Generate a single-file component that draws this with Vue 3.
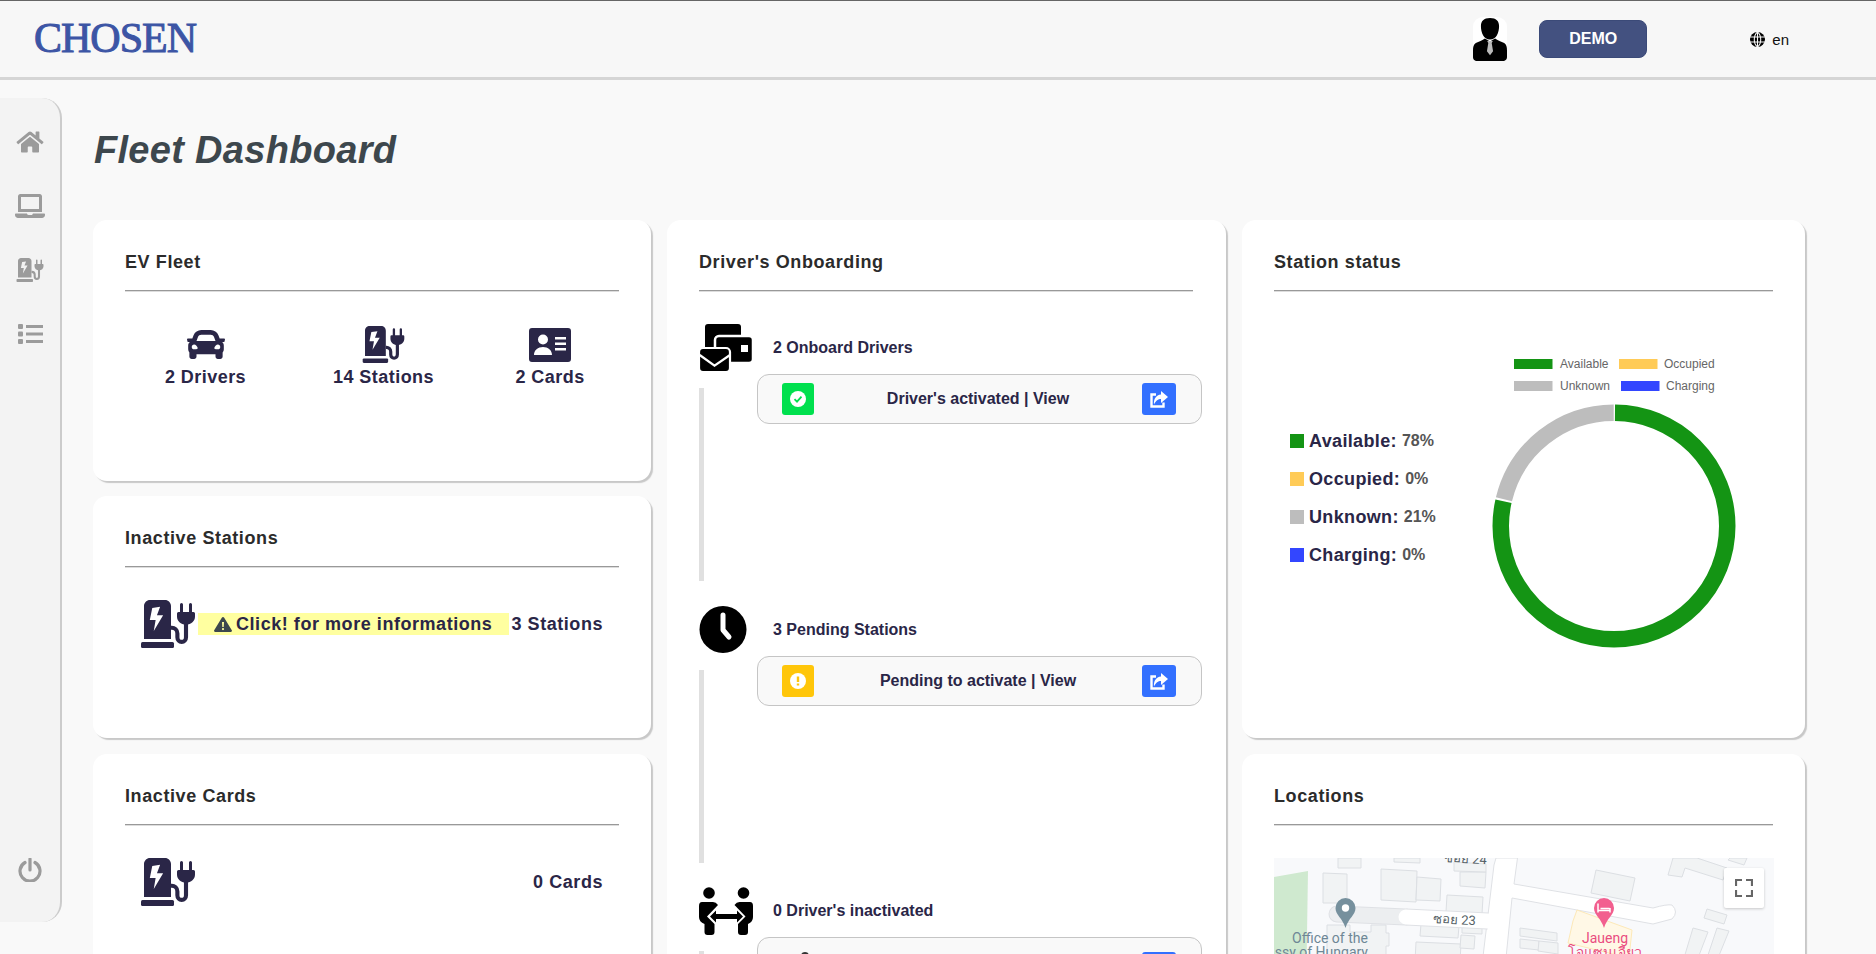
<script setup>
const fleet = [
  { icon: 'car', w: 38, h: 29, label: '2 Drivers' },
  { icon: 'station', w: 43, h: 37, label: '14 Stations' },
  { icon: 'idcard', w: 42, h: 34, label: '2 Cards' },
]

const steps = [
  { id: 'mail', label: '2 Onboard Drivers', action: "Driver's activated | View", kind: 'ok' },
  { id: 'clock', label: '3 Pending Stations', action: 'Pending to activate | View', kind: 'warn' },
  { id: 'people', label: "0 Driver's inactivated", action: '', kind: 'off' },
]

const statuses = [
  { name: 'Available', pct: '78%', color: '#149414' },
  { name: 'Occupied', pct: '0%', color: '#ffcb57' },
  { name: 'Unknown', pct: '21%', color: '#bdbdbd' },
  { name: 'Charging', pct: '0%', color: '#3346ff' },
]

// donut: 11 available / 3 unknown out of 14 stations
const radius = 113.25
const circ = 2 * Math.PI * radius
const donut = [
  { value: 11 / 14, start: 0, color: '#149414' },
  { value: 3 / 14, start: 11 / 14, color: '#bdbdbd' },
].map((s) => ({
  color: s.color,
  dash: `${s.value * circ - 2} ${circ}`,
  offset: -(s.start * circ + 1),
}))

const buildings = [
  '64,0 87,0 87,10 64,10',
  '49,15 73,16 73,45 49,45',
  '107,11 143,13 142,44 107,42',
  '143,19 167,21 166,43 142,42',
  '186,14 212,14 211,30 186,28',
  '173,37 209,39 208,56 172,54',
  '147,66 185,68 184,80 146,78',
  '142,84 187,86 186,104 141,104',
  '188,67 208,68 208,76 188,75',
  '187,77 201,78 200,91 186,90',
  '120,0 146,0 146,5 120,4',
  '180,4 212,6 212,14 180,13',
  '53,67 76,67 76,74 97,74 97,67 112,67 112,75 115,75 115,88 112,88 112,100 53,100',
  '322,12 361,20 356,43 317,35',
  '394,17 399,0 423,0 453,10 449,22 411,10 408,19',
  '456,0 473,0 470,7 454,2',
  '433,51 453,57 450,66 430,60',
  '419,70 434,74 424,100 410,100',
  '443,70 455,73 444,100 433,100',
  '246,70 283,75 283,83 246,78',
  '246,81 265,83 265,92 246,90',
  '265,83 284,85 284,96 264,93',
]
</script>

<template>
  <svg class="defs" width="0" height="0">
    <defs>
      <symbol id="station" viewBox="0 0 576 512">
        <path fill-rule="evenodd" d="M96 0h160c35 0 64 29 64 64v352H32V64C32 29 61 0 96 0zM204 72l-84 12-26 128h62l-20 118 100-168h-66l34-90z" />
        <rect y="448" width="352" height="64" rx="16" />
        <path d="M320 296h8c30 0 60 22 60 60v40c0 30 20 50 46 50s46-20 46-50V230" fill="none" stroke="currentColor" stroke-width="44" />
        <path d="M416 128V48a16 16 0 0 1 32 0v80h64V48a16 16 0 0 1 32 0v80h16a16 16 0 0 1 16 16v32c0 48-40 88-96 88s-96-40-96-88v-32a16 16 0 0 1 16-16z" />
      </symbol>
      <symbol id="car" viewBox="0 64 512 384" preserveAspectRatio="none">
        <path d="M499.99 176h-59.87l-16.64-41.6C406.38 91.63 365.57 64 319.5 64h-127c-46.06 0-86.88 27.63-103.99 70.4L71.87 176H12.01C4.2 176-1.53 183.34.37 190.91l6 24C7.7 220.25 12.5 224 18.01 224h20.07C24.65 235.73 16 252.78 16 272v48c0 16.12 6.16 30.67 16 41.93V416c0 17.67 14.33 32 32 32h32c17.67 0 32-14.33 32-32v-32h256v32c0 17.67 14.33 32 32 32h32c17.67 0 32-14.33 32-32v-54.07c9.84-11.25 16-25.8 16-41.93v-48c0-19.22-8.65-36.27-22.07-48H494c5.51 0 10.31-3.75 11.64-9.09l6-24c1.89-7.57-3.84-14.91-11.65-14.91zm-352.06-17.83c7.29-18.22 24.94-30.17 44.57-30.17h127c19.63 0 37.28 11.95 44.57 30.17L384 208H128l19.93-49.83zM96 319.8c-19.2 0-32-12.76-32-31.9S76.8 256 96 256s48 28.71 48 47.85-28.8 15.95-48 15.95zm320 0c-19.2 0-48 3.19-48-15.95S396.8 256 416 256s32 12.76 32 31.9-12.8 31.9-32 31.9z" />
      </symbol>
      <symbol id="idcard" viewBox="0 0 42 34">
        <path fill-rule="evenodd" d="M3 0h36a3 3 0 0 1 3 3v28a3 3 0 0 1-3 3H3a3 3 0 0 1-3-3V3a3 3 0 0 1 3-3zM14 6.500a5 5 0 1 0 0 10 5 5 0 0 0 0-10zM5 27h18c0-5-4-8-9-8s-9 3-9 8zM26 9v2.500h11V9zM26 14.500V17h11v-2.500zM26 20v2.500h11V20z" />
      </symbol>
    </defs>
  </svg>

  <div class="page">
    <header class="topbar">
      <div class="logo">CHOSEN</div>
      <div class="avatar">
        <svg width="34" height="44" viewBox="0 0 30 43" preserveAspectRatio="none">
          <rect width="30" height="43" rx="9" fill="#fff" />
          <path d="M15 1c5.500 0 8 3 8 8 0 3-.5 6-2 9-1 2-3 4-6 4s-5-2-6-4c-1.500-3-2-6-2-9 0-5 2.500-8 8-8z" />
          <path d="M10.500 21c-2 2-5.500 3-8 4.500C.5 27 0 29 0 33v6c0 2 1 4 4 4h22c3 0 4-2 4-4v-6c0-4-.5-6-2.500-7.500-2.500-1.500-6-2.500-8-4.500l-4.500 3z" />
          <path d="M12.500 23.500h5l-1 2 1.200 8-2.700 4-2.700-4 1.200-8z" fill="#bbb" />
        </svg>
      </div>
      <button class="demo">DEMO</button>
      <div class="lang">
        <svg width="15" height="15" viewBox="0 0 14 14">
          <circle cx="7" cy="7" r="7" />
          <path d="M0 4.700h14M0 9.300h14M7 0v14M7 0C3 3 3 11 7 14M7 0c4 3 4 11 0 14" fill="none" stroke="#f7f7f7" stroke-width="1" />
        </svg>
        <span>en</span>
      </div>
    </header>

    <div class="content">
      <nav class="sidebar">
        <svg class="nav-icon" viewBox="0 0 576 512"><path d="M280.37 148.26L96 300.11V464a16 16 0 0 0 16 16l112.06-.29a16 16 0 0 0 15.92-16V368a16 16 0 0 1 16-16h64a16 16 0 0 1 16 16v95.64a16 16 0 0 0 16 16.05L464 480a16 16 0 0 0 16-16V300L295.67 148.26a12.19 12.19 0 0 0-15.3 0zM571.6 251.47L488 182.56V44.05a12 12 0 0 0-12-12h-56a12 12 0 0 0-12 12v72.61L318.47 43a48 48 0 0 0-61 0L4.34 251.47a12 12 0 0 0-1.6 16.9l25.5 31A12 12 0 0 0 45.15 301l235.22-193.74a12.19 12.19 0 0 1 15.3 0L530.9 301a12 12 0 0 0 16.9-1.6l25.5-31a12 12 0 0 0-1.7-16.93z" /></svg>
        <svg class="nav-icon" viewBox="0 0 640 512"><path d="M624 416H381.54c-.74 19.81-14.71 32-32.74 32H288c-18.69 0-33.02-17.47-32.77-32H16c-8.8 0-16 7.2-16 16v16c0 35.2 28.8 64 64 64h512c35.2 0 64-28.8 64-64v-16c0-8.8-7.2-16-16-16zM576 48c0-26.400-21.600-48-48-48H112C85.600 0 64 21.600 64 48v336h512V48zm-64 272H128V64h384v256z" /></svg>
        <svg class="nav-icon"><use href="#station" /></svg>
        <svg class="nav-icon list-icon" viewBox="0 0 25 20">
          <rect width="5" height="5" rx="1" /><rect y="7.500" width="5" height="5" rx="1" /><rect y="15" width="5" height="5" rx="1" />
          <rect x="8" y="1" width="17" height="3" /><rect x="8" y="8.500" width="17" height="3" /><rect x="8" y="16" width="17" height="3" />
        </svg>
        <svg class="nav-icon power" viewBox="0 0 24 24">
          <path d="M7 4.500a10 10 0 1 0 10 0M12 1v11" fill="none" stroke="currentColor" stroke-width="3.200" stroke-linecap="round" />
        </svg>
      </nav>

      <main class="main">
        <h1 class="title">Fleet Dashboard</h1>
        <div class="columns">
          <div class="col">
            <section class="card fleet-card">
              <h2 class="card-title">EV Fleet</h2>
              <div class="fleet">
                <div v-for="item in fleet" :key="item.icon" class="fleet-item">
                  <div class="fleet-icon">
                    <svg :width="item.w" :height="item.h"><use :href="'#' + item.icon" /></svg>
                  </div>
                  <span>{{ item.label }}</span>
                </div>
              </div>
            </section>

            <section class="card inactive-card">
              <h2 class="card-title">Inactive Stations</h2>
              <div class="inactive">
                <svg class="station-icon"><use href="#station" /></svg>
                <div class="notice">
                  <svg width="18" height="15" viewBox="0 0 18 15">
                    <path fill-rule="evenodd" d="M9 0c.500 0 .9.200 1.200.700l7.600 12.500c.5.800-.1 1.800-1 1.800H1.200c-.9 0-1.500-1-1-1.800L7.800.700C8.100.200 8.500 0 9 0zM8 5l.3 5h1.400L10 5zM9 11a1.100 1.100 0 1 0 0 2.200A1.100 1.100 0 0 0 9 11z" />
                  </svg>
                  <span>Click! for more informations</span>
                </div>
                <span class="count">3 Stations</span>
              </div>
            </section>

            <section class="card tall-card">
              <h2 class="card-title">Inactive Cards</h2>
              <div class="inactive">
                <svg class="station-icon"><use href="#station" /></svg>
                <span class="count">0 Cards</span>
              </div>
            </section>
          </div>

          <div class="col">
            <section class="card onboarding">
              <h2 class="card-title">Driver's Onboarding</h2>
              <div v-for="step in steps" :key="step.id" class="step">
                <div class="step-head">
                  <svg class="step-icon" viewBox="0 0 54 48">
                    <template v-if="step.id === 'mail'">
                      <rect x="6" width="36" height="30" rx="3" />
                      <rect x="16" y="12" width="38" height="27" rx="4" stroke="#fff" stroke-width="2.500" />
                      <rect x="42" y="21" width="7" height="7" fill="#fff" />
                      <rect y="24" width="31" height="24" rx="4" stroke="#fff" stroke-width="2.200" />
                      <path d="M0.700 31L15.500 41.700L31 31" fill="none" stroke="#fff" stroke-width="2.200" />
                    </template>
                    <template v-else-if="step.id === 'clock'">
                      <circle cx="24" cy="23.500" r="23.500" />
                      <path d="M24 9v15l6 7" fill="none" stroke="#fff" stroke-width="5" stroke-linecap="round" stroke-linejoin="round" />
                    </template>
                    <template v-else>
                      <circle cx="10" cy="6" r="5.800" /><circle cx="44.500" cy="6" r="5.800" />
                      <path d="M3 15H14Q17 15 19 18L8 29.500L15.500 37V45Q15.500 48 12.500 48H8.500Q5.500 48 5.500 45V37Q0 35 0 30V19Q0 15 3 15Z" />
                      <path d="M51 15H40.500Q37.500 15 35.500 18L46.500 29.500L39 37V45Q39 48 42 48H46Q49 48 49 45V37Q54 35 54 30V19Q54 15 51 15Z" />
                      <path d="M11 29.500L17 23.500V27H38V23.500L44 29.500L38 35.500V32H17V35.500Z" />
                    </template>
                  </svg>
                  <span class="step-label">{{ step.label }}</span>
                </div>
                <div class="step-body">
                  <div class="rail" />
                  <div class="action" :class="'action-' + step.kind">
                    <span v-if="step.kind !== 'off'" class="badge" :class="'badge-' + step.kind">
                      <svg width="18" height="18" viewBox="0 0 18 18">
                        <circle cx="9" cy="9" r="8" fill="#fff" />
                        <path v-if="step.kind === 'ok'" d="M5.500 9.200l2.500 2.500 4.500-5" fill="none" stroke="#00e04e" stroke-width="1.800" />
                        <path v-else d="M9 4.500v5.500M9 11.500v2" fill="none" stroke="#ffc60a" stroke-width="2.400" />
                      </svg>
                    </span>
                    <span v-else class="badge badge-off"><i class="dot" /></span>
                    <span class="action-text">{{ step.action }}</span>
                    <span class="share">
                      <svg v-if="step.kind !== 'off'" width="34" height="32" viewBox="0 0 34 32">
                        <path d="M14 11.500H9.500v12h12v-4" fill="none" stroke="#fff" stroke-width="2.400" />
                        <path d="M26 14L19 8v3.500c-5 .5-7.500 4.500-7 10 2-4 4-5.500 7-5.500v4z" fill="#fff" />
                      </svg>
                    </span>
                  </div>
                </div>
              </div>
            </section>
          </div>

          <div class="col">
            <section class="card status-card">
              <h2 class="card-title">Station status</h2>
              <div class="status">
                <ul class="status-list">
                  <li v-for="s in statuses" :key="s.name">
                    <i class="swatch" :style="{ background: s.color }" />
                    <b>{{ s.name }}:</b>
                    <em>{{ s.pct }}</em>
                  </li>
                </ul>
                <svg class="chart" width="260" height="310" viewBox="0 0 260 310">
                  <rect x="29" y="9" width="38.500" height="10" fill="#149414" />
                  <text x="75" y="18">Available</text>
                  <rect x="134" y="9" width="38.500" height="10" fill="#ffcb57" />
                  <text x="179" y="18">Occupied</text>
                  <rect x="29" y="31" width="38.500" height="10" fill="#bdbdbd" />
                  <text x="75" y="40">Unknown</text>
                  <rect x="136" y="31" width="38.500" height="10" fill="#3346ff" />
                  <text x="181" y="40">Charging</text>
                  <g transform="rotate(-90 129 176)">
                    <circle
                      v-for="seg in donut"
                      :key="seg.color"
                      cx="129"
                      cy="176"
                      :r="radius"
                      fill="none"
                      stroke-width="16.500"
                      :stroke="seg.color"
                      :stroke-dasharray="seg.dash"
                      :stroke-dashoffset="seg.offset"
                    />
                  </g>
                </svg>
              </div>
            </section>

            <section class="card tall-card">
              <h2 class="card-title">Locations</h2>
              <div class="map">
                <svg width="500" height="140" viewBox="0 0 500 140">
                  <rect width="500" height="140" fill="#f8f9fb" />
                  <polygon points="0,19 34,13 32,140 0,140" fill="#cfe9cf" />
                  <path d="M222 0L243.500 0L240 26L379 50Q393 46 398 47Q405 54 398 61L379 66L238 40L228 140L204 140L220 7Z" fill="#fff" stroke="#dfe1e5" />
                  <polygon v-for="b in buildings" :key="b" :points="b" fill="#f1f3f4" stroke="#dcdfe3" />
                  <polygon points="303,52 358,72 355,100 294,85 299,63" fill="#fff8e6" stroke="#fde9b8" />
                  <path d="M63 56L132 59" stroke="#dfe1e5" stroke-width="17" stroke-linecap="round" />
                  <path d="M63 56L132 59" stroke="#eceef0" stroke-width="15" stroke-linecap="round" />
                  <path d="M132 59L214 63" stroke="#dfe1e5" stroke-width="17" />
                  <path d="M132 59L214 63" stroke="#fff" stroke-width="15" stroke-linecap="round" />
                  <text class="road" x="159" y="65" transform="rotate(3 159 60)">ซอย 23</text>
                  <text class="road" x="170" y="4" transform="rotate(3 170 0)">ซอย 24</text>
                  <path d="M71.500 40a10 10 0 0 1 10 10c0 7-7 10-10 20-3-10-10-13-10-20a10 10 0 0 1 10-10z" fill="#76909d" />
                  <circle cx="71.500" cy="50" r="3.700" fill="#fff" />
                  <path d="M330 40a10 10 0 0 1 10 10c0 7-7 10-10 20-3-10-10-13-10-20a10 10 0 0 1 10-10z" fill="#f25f8f" />
                  <path d="M324 45.500v9M324 52.500h12M336 50v4.500M326.500 50.500h9" fill="none" stroke="#fff" stroke-width="1.500" />
                  <text class="place" x="56" y="85" text-anchor="middle">Office of the</text>
                  <text class="place" x="94" y="99" text-anchor="end">Embassy of Hungary</text>
                  <text class="hotel" x="331" y="85" text-anchor="middle">Jaueng</text>
                  <text class="hotel" x="331" y="99" text-anchor="middle">โจแซนเจียว</text>
                </svg>
                <div class="fullscreen">
                  <svg width="18" height="18" viewBox="0 0 18 18">
                    <path d="M1 7V1h6M11 1h6v6M17 11v6h-6M7 17H1v-6" fill="none" stroke="#666" stroke-width="2.200" />
                  </svg>
                </div>
              </div>
            </section>
          </div>
        </div>
      </main>
    </div>
  </div>
</template>

<style>
html,
body {
  margin: 0;
  height: 954px;
  overflow: hidden;
  background: #f9f9f9;
}
</style>

<style scoped>
.defs {
  position: absolute;
}

.page {
  height: 954px;
  overflow: hidden;
  font-family: "Liberation Sans", Arial, sans-serif;
  color: #2a2647;
}

.topbar {
  display: flex;
  align-items: center;
  box-sizing: border-box;
  height: 80px;
  background: #f7f7f7;
  border-top: 1px solid #666;
  border-bottom: 3px solid #d5d5d5;
}

.logo {
  margin-left: 34px;
  margin-top: -2px;
  font-family: "Liberation Serif", serif;
  font-size: 42px;
  letter-spacing: -1px;
  color: #3c55a5;
  -webkit-text-stroke: 1px #3c55a5;
}

.avatar {
  display: flex;
  margin-left: auto;
}

.demo {
  width: 108px;
  height: 38px;
  margin-left: 32px;
  background: #435180;
  border: 1px solid #3b4a78;
  border-radius: 8px;
  color: #fff;
  font: bold 16px "Liberation Sans", Arial, sans-serif;
}

.lang {
  display: flex;
  align-items: center;
  gap: 7px;
  margin-left: 103px;
  margin-right: 87px;
  font-size: 15px;
  color: #111;
}

.content {
  display: flex;
  padding-top: 18px;
}

.sidebar {
  display: flex;
  flex-direction: column;
  align-items: center;
  gap: 40px;
  flex: none;
  box-sizing: border-box;
  width: 62px;
  height: 824px;
  padding: 32px 0 40px;
  background: #f3f3f3;
  border-right: 2px solid #ccc;
  border-radius: 0 20px 20px 0;
  color: #9b9b9b;
}

.nav-icon {
  width: 30px;
  height: 24px;
  fill: #9b9b9b;
  color: #9b9b9b;
}

.list-icon {
  width: 25px;
}

.power {
  margin-top: auto;
}

.main {
  flex: none;
  margin-left: 31px;
}

.title {
  margin: 30px 0 48px 1px;
  font-size: 38px;
  line-height: 44px;
  font-style: italic;
  font-weight: bold;
  letter-spacing: 0.3px;
  color: #3d474d;
}

.columns {
  display: grid;
  grid-template-columns: 559px 560px 564px;
  column-gap: 15px;
}

.col {
  display: flex;
  flex-direction: column;
  gap: 16px;
}

.card {
  box-sizing: border-box;
  margin-right: 1px;
  padding: 30px 32px 0;
  background: #fff;
  border-radius: 14px;
  box-shadow: 2px 2px 1px #c8c8c8;
}

.card-title {
  margin: 0 0 16px;
  padding-bottom: 16px;
  border-bottom: 1px solid #999;
  font-size: 18px;
  line-height: 24px;
  font-weight: bold;
  letter-spacing: 0.6px;
  color: #2b2b2b;
  box-shadow: 0 1px 0 #ddd;
}

.fleet-card {
  height: 261px;
  margin-bottom: -1px;
}

.inactive-card {
  height: 242px;
}

.tall-card {
  height: 320px;
}

.fleet {
  display: grid;
  grid-template-columns: 161px 195px 138px;
  margin-top: 35px;
}

.fleet-item {
  display: flex;
  flex-direction: column;
  align-items: center;
  gap: 3px;
  font-size: 18px;
  line-height: 22px;
  font-weight: bold;
  letter-spacing: 0.45px;
}

.fleet-icon {
  display: flex;
  align-items: center;
  height: 37px;
  fill: #2a2647;
  color: #2a2647;
}

.inactive {
  display: flex;
  align-items: center;
  margin-top: 33px;
  padding: 0 16px;
  font-size: 18px;
  font-weight: bold;
  letter-spacing: 0.55px;
}

.station-icon {
  flex: none;
  width: 54px;
  height: 48px;
  fill: #2a2647;
  color: #2a2647;
}

.notice {
  display: flex;
  align-items: center;
  gap: 4px;
  box-sizing: border-box;
  width: 311px;
  height: 22px;
  margin-left: 3px;
  padding-left: 16px;
  background: #ffffa0;
  fill: #3d474d;
}

.count {
  margin-left: auto;
}

.onboarding {
  height: 900px;
  padding-right: 33px;
}

.step {
  position: relative;
}

.step-head {
  display: flex;
  align-items: center;
  gap: 20px;
  height: 48px;
  margin-top: 33px;
}

.step + .step .step-head {
  margin-top: 0;
}

.step-icon {
  flex: none;
  width: 54px;
  height: 48px;
}

.step-label {
  font-size: 16px;
  font-weight: bold;
}

.step-body {
  display: flex;
  align-items: flex-start;
  height: 233.5px;
}

.rail {
  flex: none;
  width: 5px;
  height: 193px;
  margin-top: 16px;
  background: #e0e0e0;
}

.action {
  display: flex;
  align-items: center;
  flex: none;
  box-sizing: border-box;
  width: 445px;
  height: 50px;
  margin-top: 2px;
  margin-left: 53px;
  padding: 0 25px 0 24px;
  background: #f9f9f9;
  border: 1px solid #c5c5c5;
  border-radius: 12px;
}

.action-off {
  height: 70px;
  padding-top: 14px;
  align-items: flex-start;
}

.badge {
  display: flex;
  align-items: center;
  justify-content: center;
  flex: none;
  width: 32px;
  height: 32px;
  border-radius: 3px;
}

.badge-ok {
  background: #00e04e;
}

.badge-warn {
  background: #ffc60a;
}

.badge-off {
  align-items: flex-start;
  justify-content: flex-start;
}

.dot {
  width: 8px;
  height: 8px;
  margin-left: 19px;
  background: #333;
  border-radius: 50%;
}

.action-text {
  flex: 1;
  text-align: center;
  font-size: 16px;
  font-weight: bold;
}

.share {
  display: flex;
  flex: none;
  width: 34px;
  height: 32px;
  background: #3370ff;
  border-radius: 3px;
}

.status-card {
  height: 518px;
}

.status {
  display: flex;
  margin-top: 59px;
}

.status-list {
  flex: none;
  width: 211px;
  margin: 72px 0 0;
  padding: 0 0 0 16px;
  box-sizing: border-box;
  list-style: none;
}

.status-list li {
  display: flex;
  align-items: center;
  height: 38px;
}

.swatch {
  flex: none;
  width: 14px;
  height: 14px;
  margin-right: 5px;
}

.status-list b {
  font-size: 18px;
  letter-spacing: 0.35px;
}

.status-list em {
  margin-left: 5px;
  font-style: normal;
  font-weight: bold;
  font-size: 16px;
  color: #555;
}

.chart {
  flex: none;
  margin-left: 0;
}

.chart text {
  font-size: 12px;
  fill: #666;
}

.map {
  position: relative;
  width: 500px;
  height: 140px;
  margin-top: 33px;
  overflow: hidden;
}

.map text {
  font-family: Roboto, "Liberation Sans", sans-serif;
}

.road {
  font-size: 13px;
  fill: #555f66;
}

.place {
  font-size: 14px;
  fill: #6e8796;
}

.hotel {
  font-size: 14px;
  fill: #ea4c80;
}

.fullscreen {
  position: absolute;
  top: 10px;
  left: 450px;
  display: flex;
  align-items: center;
  justify-content: center;
  width: 40px;
  height: 40px;
  background: #fff;
  border-radius: 2px;
  box-shadow: 0 1px 3px rgba(0, 0, 0, 0.2);
}
</style>
